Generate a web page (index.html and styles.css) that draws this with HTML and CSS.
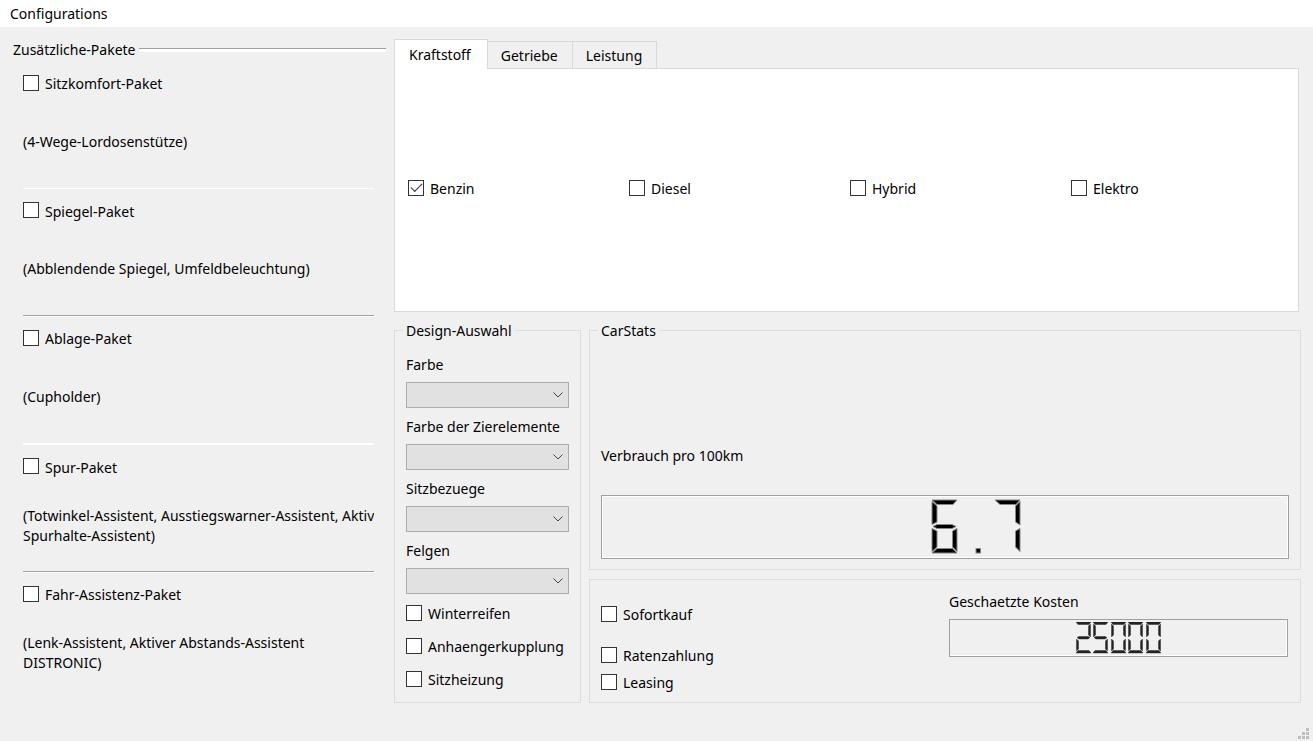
FILE: index.html
```html
<!DOCTYPE html>
<html lang="de">
<head>
<meta charset="utf-8">
<title>Configurations</title>
<link rel="stylesheet" href="styles.css">
</head>
<body>
<svg class="defs" aria-hidden="true">
  <defs>
    <g id="a"><path d="M0 0H25L21 4.500H5Z"/></g>
    <g id="f"><path d="M0 1.500L5 6V22L0 24.500Z"/></g>
    <g id="b"><path d="M25 1.500L20.500 6V22L25 25Z"/></g>
    <g id="g"><path d="M1 26.500L5 24.500H20L24 26.500L20 28.500H5Z"/></g>
    <g id="e"><path d="M0 28.500L5 31V47L0 51.500Z"/></g>
    <g id="c"><path d="M25 28.500L20.500 31V47L25 51.500Z"/></g>
    <g id="d"><path d="M0 53L5 48.500H20.500L25 53Z"/></g>
    <g id="sa"><path d="M0 0H15L13 2.500H2Z"/></g>
    <g id="sf"><path d="M0.500 2L2.500 4V13L0.500 15Z"/></g>
    <g id="sb"><path d="M14.500 2L12.500 4V13L14.500 15Z"/></g>
    <g id="sg"><path d="M1 15.500L3 14.500H12L14 15.500L12 17H3Z"/></g>
    <g id="se"><path d="M0.500 17L2.500 19V27L0.500 29Z"/></g>
    <g id="sc"><path d="M14.500 17L12.500 19V27L14.500 29Z"/></g>
    <g id="sd"><path d="M0 31L2 28.500H13L15 31Z"/></g>
  </defs>
</svg>
<div class="window">
  <header class="menubar"><button class="menu" type="button">Configurations</button></header>
  <main class="content">
    <section class="packages" aria-labelledby="pk">
      <h2 class="packages-title" id="pk">Zusätzliche-Pakete</h2>
      <div class="package line-light">
        <label class="check"><input type="checkbox"><span>Sitzkomfort-Paket</span></label>
        <p class="desc">(4-Wege-Lordosenstütze)</p>
      </div>
      <div class="package line-dark">
        <label class="check"><input type="checkbox"><span>Spiegel-Paket</span></label>
        <p class="desc">(Abblendende Spiegel, Umfeldbeleuchtung)</p>
      </div>
      <div class="package line-thick">
        <label class="check"><input type="checkbox"><span>Ablage-Paket</span></label>
        <p class="desc">(Cupholder)</p>
      </div>
      <div class="package line-dark">
        <label class="check"><input type="checkbox"><span>Spur-Paket</span></label>
        <p class="desc">(Totwinkel-Assistent, Ausstiegswarner-Assistent, Aktiv<br>Spurhalte-Assistent)</p>
      </div>
      <div class="package">
        <label class="check"><input type="checkbox"><span>Fahr-Assistenz-Paket</span></label>
        <p class="desc">(Lenk-Assistent, Aktiver Abstands-Assistent<br>DISTRONIC)</p>
      </div>
    </section>

    <div class="right">
      <section class="tabs">
        <div class="tablist" role="tablist">
          <button class="tab active" type="button" role="tab" aria-selected="true">Kraftstoff</button>
          <button class="tab" type="button" role="tab" aria-selected="false">Getriebe</button>
          <button class="tab" type="button" role="tab" aria-selected="false">Leistung</button>
        </div>
        <div class="pane" role="tabpanel">
          <label class="check"><input type="checkbox" checked><span>Benzin</span></label>
          <label class="check"><input type="checkbox"><span>Diesel</span></label>
          <label class="check"><input type="checkbox"><span>Hybrid</span></label>
          <label class="check"><input type="checkbox"><span>Elektro</span></label>
        </div>
      </section>

      <div class="lower">
        <fieldset class="group design">
          <legend>Design-Auswahl</legend>
          <div class="field"><label for="farbe">Farbe</label><span class="combo"><select id="farbe"></select><svg viewBox="0 0 10 6"><path d="M.5 .5L5 5L9.500 .5"/></svg></span></div>
          <div class="field"><label for="zier">Farbe der Zierelemente</label><span class="combo"><select id="zier"></select><svg viewBox="0 0 10 6"><path d="M.5 .5L5 5L9.500 .5"/></svg></span></div>
          <div class="field"><label for="sitz">Sitzbezuege</label><span class="combo"><select id="sitz"></select><svg viewBox="0 0 10 6"><path d="M.5 .5L5 5L9.500 .5"/></svg></span></div>
          <div class="field"><label for="felgen">Felgen</label><span class="combo"><select id="felgen"></select><svg viewBox="0 0 10 6"><path d="M.5 .5L5 5L9.500 .5"/></svg></span></div>
          <div class="extras">
            <label class="check"><input type="checkbox"><span>Winterreifen</span></label>
            <label class="check"><input type="checkbox"><span>Anhaengerkupplung</span></label>
            <label class="check"><input type="checkbox"><span>Sitzheizung</span></label>
          </div>
        </fieldset>

        <div class="stats-column">
          <fieldset class="group stats">
            <legend>CarStats</legend>
            <p class="stats-label">Verbrauch pro 100km</p>
            <div class="lcd lcd-large" role="img" aria-label="6.7">
              <svg width="91" height="56" viewBox="-1 -1 91 56">
                <g class="lamp"><use href="#a"/><use href="#f"/><use href="#g"/><use href="#e"/><use href="#c"/><use href="#d"/></g>
                <rect class="lamp" x="44" y="48.500" width="4.500" height="4.500"/>
                <g class="lamp" transform="translate(63 0)"><use href="#a"/><use href="#b"/><use href="#c"/></g>
              </svg>
            </div>
          </fieldset>
          <section class="group payment">
            <div class="options">
              <label class="check"><input type="checkbox"><span>Sofortkauf</span></label>
              <label class="check"><input type="checkbox"><span>Ratenzahlung</span></label>
              <label class="check"><input type="checkbox"><span>Leasing</span></label>
            </div>
            <div class="cost">
              <p>Geschaetzte Kosten</p>
              <div class="lcd lcd-small" role="img" aria-label="25000">
                <svg width="87" height="32" viewBox="0 0 87 32">
                  <g class="thin" transform="translate(1 0)"><use href="#sa"/><use href="#sb"/><use href="#sg"/><use href="#se"/><use href="#sd"/></g>
                  <g class="thin" transform="translate(18 0)"><use href="#sa"/><use href="#sf"/><use href="#sg"/><use href="#sc"/><use href="#sd"/></g>
                  <g class="thin" transform="translate(36 0)"><use href="#sa"/><use href="#sf"/><use href="#sb"/><use href="#se"/><use href="#sc"/><use href="#sd"/></g>
                  <g class="thin" transform="translate(53 0)"><use href="#sa"/><use href="#sf"/><use href="#sb"/><use href="#se"/><use href="#sc"/><use href="#sd"/></g>
                  <g class="thin" transform="translate(71 0)"><use href="#sa"/><use href="#sf"/><use href="#sb"/><use href="#se"/><use href="#sc"/><use href="#sd"/></g>
                </svg>
              </div>
            </div>
          </section>
        </div>
      </div>
    </div>
  </main>
  <footer class="statusbar">
    <svg width="11" height="11" viewBox="0 0 11 11" fill="#bfbfbf"><path d="M8 0h3v3h-3zM4 4h3v3h-3zM8 4h3v3h-3zM0 8h3v3h-3zM4 8h3v3h-3zM8 8h3v3h-3z"/></svg>
  </footer>
</div>
</body>
</html>
```

FILE: styles.css
```css
* { box-sizing: border-box; }

body {
  margin: 0;
  background: #f0f0f0;
  color: #000;
  font-family: "Noto Sans", "Open Sans", sans-serif;
  font-size: 14px;
  line-height: 20px;
}

p, h2 { margin: 0; font-size: inherit; font-weight: normal; }
button, select { font: inherit; color: inherit; }
.defs { display: block; width: 0; height: 0; }

.window { display: flex; flex-direction: column; min-height: 100vh; }

.menubar { background: #fff; height: 27px; padding: 4px 10px 0; }
.menu { display: block; border: 0; padding: 0; background: none; }

.content {
  flex: 1;
  display: grid;
  grid-template-columns: 373fr 907fr;
  gap: 8px;
  padding: 12px 12px 0 13px;
}

/* packages */
.packages { display: flex; flex-direction: column; min-width: 0; padding-bottom: 4px; }
.packages-title { display: flex; align-items: center; gap: 3px; height: 22px; }
.packages-title::after {
  content: "";
  flex: 1;
  height: 3px;
  border-top: 1px solid #a0a0a0;
  background: #fff;
}
.package {
  flex: 1;
  display: flex;
  flex-direction: column;
  margin: 0 12px 0 10px;
  padding-top: 13px;
  border-bottom: 0 solid #fff;
}
.line-light { border-bottom-width: 1px; }
.line-thick { border-bottom-width: 2px; }
.line-dark { border-bottom: 1px solid #a0a0a0; box-shadow: 0 1px #fff; }
.desc {
  flex: 1;
  display: grid;
  align-content: center;
  justify-content: start;
  padding-top: 2px;
  white-space: nowrap;
  overflow: hidden;
}

.check { display: flex; align-items: center; gap: 6px; height: 20px; }
.check input {
  appearance: none;
  flex: none;
  width: 16px;
  height: 16px;
  margin: 0 0 3px;
  border: 1px solid #333;
  background: #fff;
}
.check input:checked { display: grid; place-items: center; }
.check input:checked::before {
  content: "";
  width: 10px;
  height: 5px;
  margin-bottom: 3px;
  border: solid #333;
  border-width: 0 0 1px 1px;
  transform: rotate(-45deg);
}

/* tabs */
.right { display: flex; flex-direction: column; min-width: 0; }
.tabs { flex: 274; display: flex; flex-direction: column; margin-right: 2px; }
.tablist { display: flex; align-items: flex-end; height: 30px; }
.tab {
  height: 28px;
  padding: 1px 14px 0 13px;
  border: 1px solid #d9d9d9;
  border-left: 0;
  background: #f0f0f0;
}
.tab.active {
  height: 30px;
  padding: 0 16px 0 14px;
  border-left: 1px solid #d9d9d9;
  border-bottom: 0;
  background: #fff;
}
.tablist::after { content: ""; flex: 1; border-bottom: 1px solid #d9d9d9; }
.pane {
  flex: 1;
  display: grid;
  grid-template-columns: repeat(4, 1fr);
  align-items: center;
  padding: 0 6px 2px 13px;
  border: 1px solid #d9d9d9;
  border-top: 0;
  background: #fff;
}

/* lower groups */
.lower {
  flex: 382;
  display: grid;
  grid-template-columns: 187fr 712fr;
  gap: 8px;
  padding-top: 8px;
}
.group { min-width: 0; margin: 0; border: 1px solid #dcdcdc; }
legend { margin-left: -3px; padding: 1px 3px 0; }
.design { padding: 14px 11px 0; }
.field { height: 62px; }
.field label { display: block; height: 27px; }
.combo { display: grid; align-items: center; }
.combo select {
  appearance: none;
  grid-area: 1 / 1;
  width: 100%;
  height: 26px;
  border: 1px solid #adadad;
  border-radius: 0;
  background: #e1e1e1;
}
.combo svg {
  grid-area: 1 / 1;
  justify-self: end;
  width: 10px;
  height: 6px;
  margin-right: 6px;
  fill: none;
  stroke: #444;
  pointer-events: none;
}
.extras { display: grid; gap: 13px; padding-top: 1px; }

.stats-column { display: flex; flex-direction: column; gap: 9px; min-width: 0; }
.stats { flex: 1; display: flex; flex-direction: column; padding: 0 11px 10px; }
.stats-label { margin: 105px 0 29px; }
.lcd { display: flex; justify-content: center; align-items: center; }
.lcd-large {
  height: 64px;
  padding-left: 62px;
  border: 1px solid #a0a0a0;
  outline: 1px solid #fff;
  outline-offset: -2px;
}
.lcd-small {
  height: 38px;
  border: 1px solid #a0a0a0;
  box-shadow: inset -1px -1px #fff;
}
.lamp { fill: #000; stroke: #888; stroke-width: 1px; }
.thin { fill: #222; stroke: #999; stroke-width: 1px; paint-order: stroke; }

.payment { display: grid; grid-template-columns: 348fr 339fr; height: 124px; padding: 12px 12px 0 11px; }
.options { padding-top: 13px; }
.options .check:first-child { margin-bottom: 21px; }
.options .check + .check { margin-bottom: 7px; }
.cost p { margin-bottom: 7px; }

.statusbar { display: flex; height: 38px; justify-content: flex-end; align-items: flex-end; padding: 0 4px 2px; }
```
